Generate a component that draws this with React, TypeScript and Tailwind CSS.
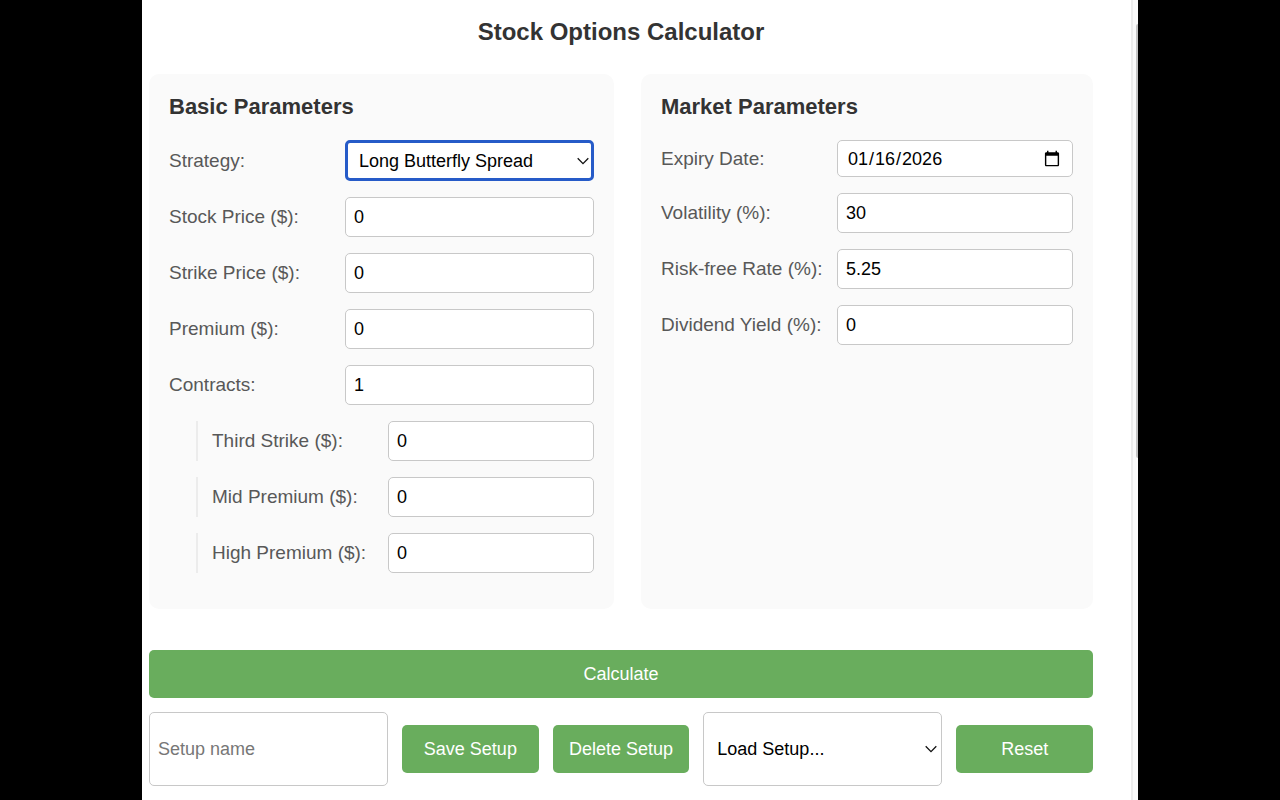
import type { ReactNode } from "react";

const inputClass =
  "block h-10 w-full min-w-0 rounded-[5px] border border-[#c8c8c8] bg-white px-2 text-lg text-black outline-none";

function Row({ id, label, nested = false, children }: { id: string; label: string; nested?: boolean; children: ReactNode }) {
  return (
    <div className={nested ? "ml-[27px] flex items-center border-l-2 border-[#ececec] pl-3.5" : "flex items-center"}>
      <label htmlFor={id} className="w-44 shrink-0 whitespace-nowrap text-[#585858]">
        {label}
      </label>
      <div className="min-w-0 flex-1">{children}</div>
    </div>
  );
}

function NumberRow({ id, label, value, nested }: { id: string; label: string; value: string; nested?: boolean }) {
  return (
    <Row id={id} label={label} nested={nested}>
      <input id={id} type="text" inputMode="decimal" defaultValue={value} className={inputClass} />
    </Row>
  );
}

function Chevron({ className }: { className: string }) {
  return (
    <svg viewBox="0 0 12 8" className={className} fill="none" stroke="#111" strokeWidth="1.3" aria-hidden="true">
      <path d="M0.7 1.2 6 6.6 11.3 1.2" />
    </svg>
  );
}

function Panel({ title, children }: { title: string; children: ReactNode }) {
  return (
    <section className="rounded-[10px] bg-[#fafafa] px-5 pt-5 pb-9">
      <h2 className="mb-5 text-[22px] leading-[26px] font-bold text-[#333]">{title}</h2>
      <div className="flex flex-col gap-4">{children}</div>
    </section>
  );
}

const buttonClass = "h-12 w-full rounded-[5px] bg-[#69ad5d] text-lg text-white";

export default function App() {
  return (
    <div className="flex min-h-screen bg-black px-[142px] font-['Liberation_Sans',Arial,sans-serif] text-[19px] leading-6">
      <main className="min-w-0 flex-1 bg-white pt-4 pr-[38px] pb-3.5 pl-[7px]">
        <h1 className="mb-[26px] text-center text-2xl leading-8 font-bold text-[#333]">Stock Options Calculator</h1>

        <div className="grid grid-cols-[465fr_452fr] gap-[27px]">
          <Panel title="Basic Parameters">
            <Row id="strategy" label="Strategy:">
              <div className="relative">
                <select
                  id="strategy"
                  defaultValue="butterfly"
                  className="block h-[41px] w-full appearance-none rounded-[5px] border-3 border-[#265bc8] bg-white pr-7 pl-[11px] text-lg text-black outline-none"
                >
                  <option value="butterfly">Long Butterfly Spread</option>
                </select>
                <Chevron className="pointer-events-none absolute top-[17px] right-[5px] h-2 w-3" />
              </div>
            </Row>
            <NumberRow id="stock-price" label="Stock Price ($):" value="0" />
            <NumberRow id="strike-price" label="Strike Price ($):" value="0" />
            <NumberRow id="premium" label="Premium ($):" value="0" />
            <NumberRow id="contracts" label="Contracts:" value="1" />
            <NumberRow id="third-strike" label="Third Strike ($):" value="0" nested />
            <NumberRow id="mid-premium" label="Mid Premium ($):" value="0" nested />
            <NumberRow id="high-premium" label="High Premium ($):" value="0" nested />
          </Panel>

          <Panel title="Market Parameters">
            <Row id="expiry" label="Expiry Date:">
              <input
                id="expiry"
                type="date"
                defaultValue="2026-01-16"
                className="block h-[37px] w-full min-w-0 rounded-[5px] border border-[#c8c8c8] bg-white px-[9px] text-lg text-black outline-none"
              />
            </Row>
            <NumberRow id="volatility" label="Volatility (%):" value="30" />
            <NumberRow id="rate" label="Risk-free Rate (%):" value="5.25" />
            <NumberRow id="dividend" label="Dividend Yield (%):" value="0" />
          </Panel>
        </div>

        <button type="button" className={"mt-[41px] block " + buttonClass}>
          Calculate
        </button>

        <div className="mt-3.5 grid grid-cols-[7fr_4fr_4fr_7fr_4fr] items-center gap-3.5">
          <input
            type="text"
            aria-label="Setup name"
            placeholder="Setup name"
            className="h-[74px] w-full min-w-0 rounded-[5px] border border-[#c8c8c8] bg-white px-2 text-lg outline-none placeholder:text-[#777]"
          />
          <button type="button" className={buttonClass}>
            Save Setup
          </button>
          <button type="button" className={buttonClass}>
            Delete Setup
          </button>
          <div className="relative">
            <select
              aria-label="Load setup"
              defaultValue=""
              className="block h-[74px] w-full appearance-none rounded-[5px] border border-[#c8c8c8] bg-white pr-7 pl-[13px] text-lg text-black outline-none"
            >
              <option value="">Load Setup...</option>
            </select>
            <Chevron className="pointer-events-none absolute top-[33px] right-[5px] h-2 w-3" />
          </div>
          <button type="button" className={buttonClass}>
            Reset
          </button>
        </div>
      </main>

      <div className="flex w-[7px] shrink-0 flex-col items-end border-l-2 border-[#ececec] bg-[#fafafa] pt-6" aria-hidden="true">
        <div className="h-[434px] w-0.5 rounded-l-full bg-[#c4c4c4]" />
      </div>
    </div>
  );
}
